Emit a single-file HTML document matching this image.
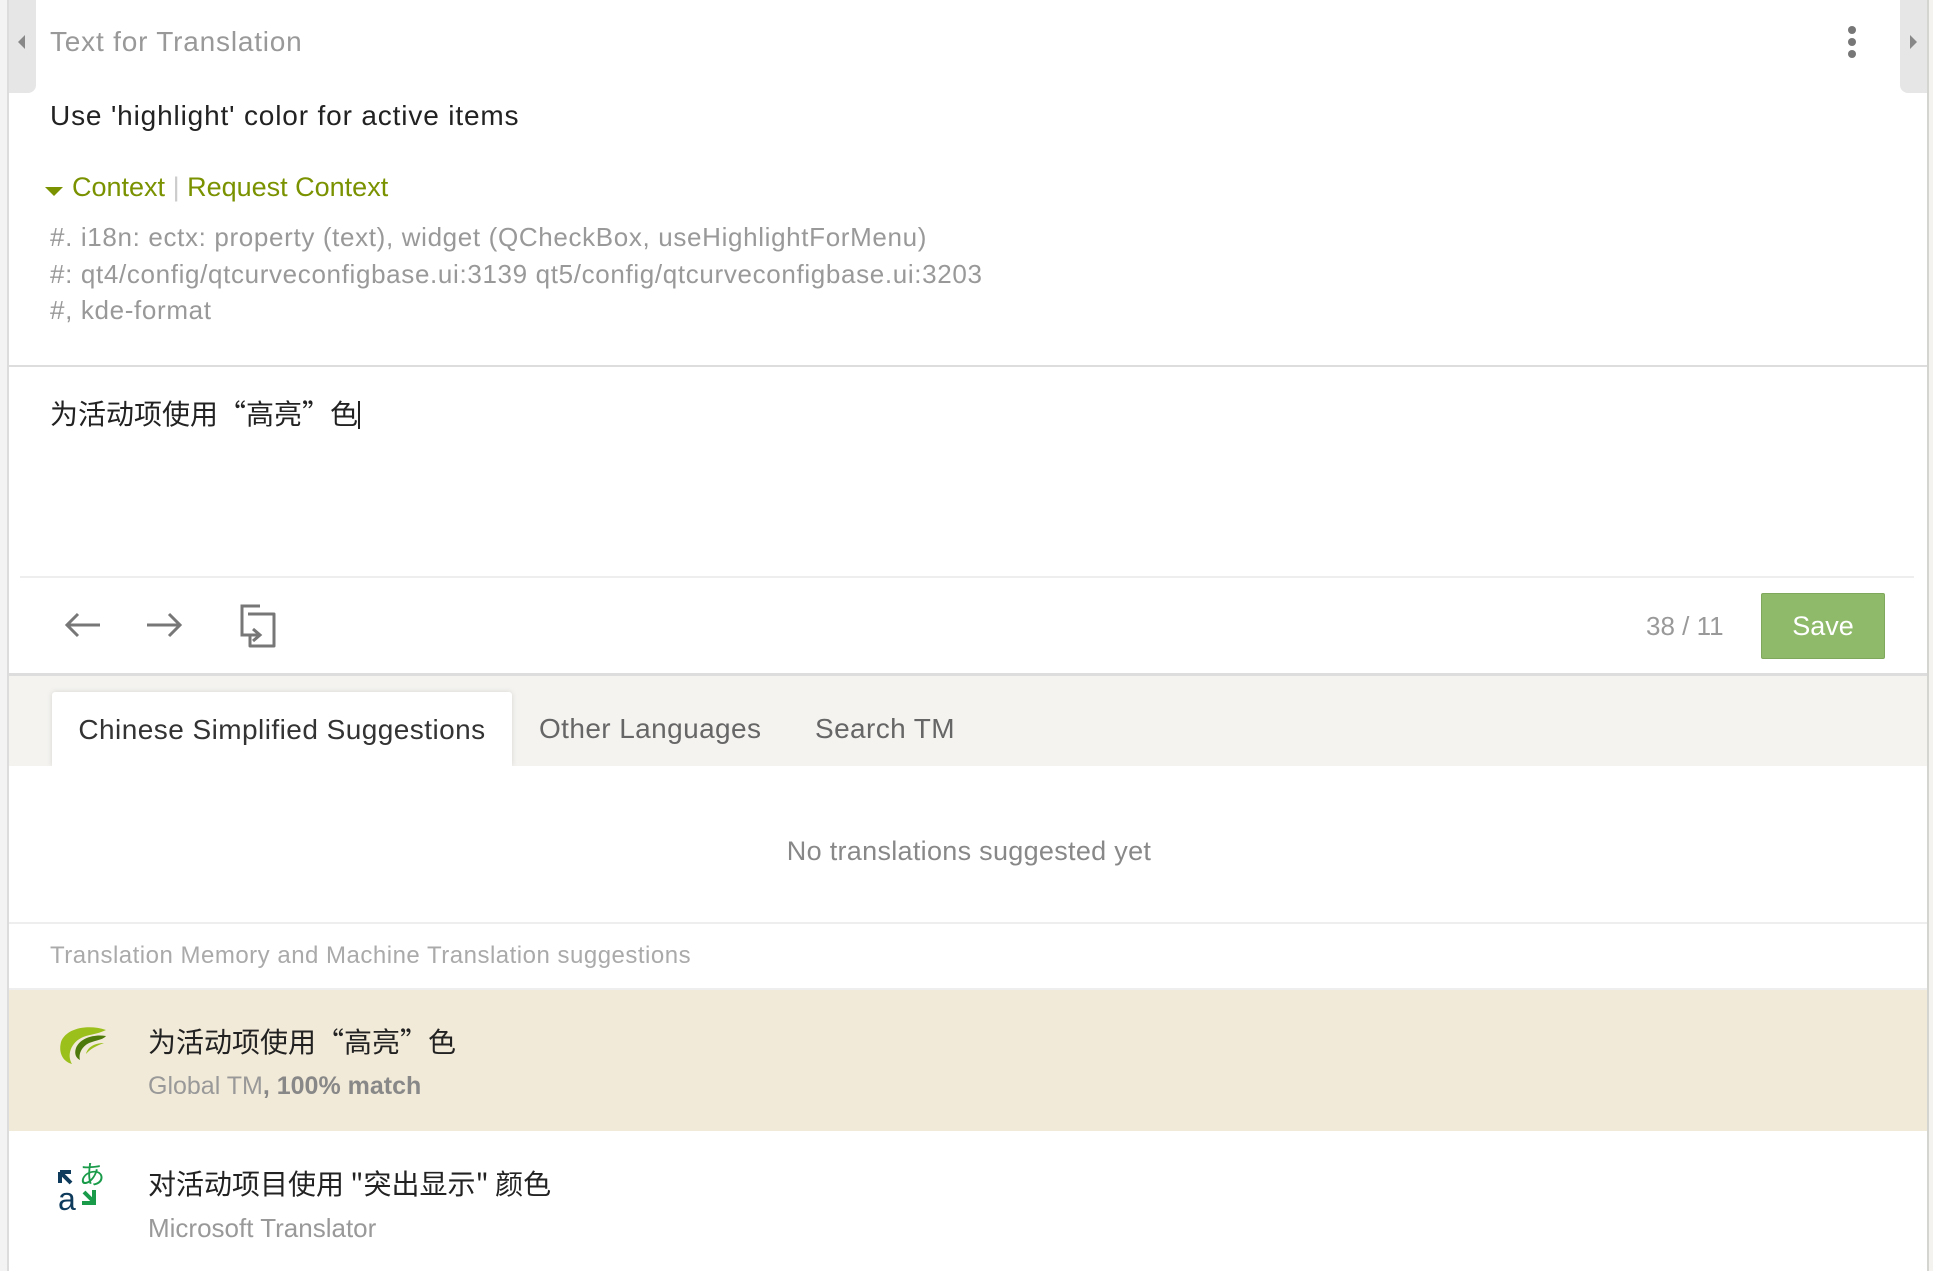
<!DOCTYPE html>
<html><head><meta charset="utf-8"><style>
*{margin:0;padding:0;box-sizing:border-box}
body{width:1933px;height:1271px;background:#fff;position:relative;overflow:hidden;font-family:"Liberation Sans","Noto Sans CJK SC",sans-serif}
.a{position:absolute;white-space:nowrap}
.cjk{font-family:"Noto Sans CJK SC","Liberation Sans",sans-serif}
</style></head><body>
<div class="a" style="left:0;top:0;width:9px;height:1271px;background:#f3f3f3;border-right:2px solid #dcdcdc"></div>
<div class="a" style="left:9px;top:0;width:27px;height:93px;background:#e6e6e6;border-bottom-right-radius:8px"></div>
<div class="a" style="left:18px;top:35px;width:0;height:0;border-top:7px solid transparent;border-bottom:7px solid transparent;border-right:7px solid #888"></div>
<div class="a" style="left:1927px;top:0;width:6px;height:1271px;background:#f4f3f0;border-left:2px solid #d4d4d0"></div>
<div class="a" style="left:1900px;top:0;width:27px;height:93px;background:#e6e6e6;border-bottom-left-radius:8px"></div>
<div class="a" style="left:1910px;top:35px;width:0;height:0;border-top:7px solid transparent;border-bottom:7px solid transparent;border-left:7px solid #888"></div>
<div class="a" style="left:1848px;top:26px;width:8px;height:8px;border-radius:50%;background:#777;box-shadow:0 12px 0 #777,0 24px 0 #777"></div>

<div class="a" style="left:50px;top:26px;font-size:28px;color:#999;letter-spacing:0.8px">Text for Translation</div>
<div class="a" style="left:50px;top:100px;font-size:28px;color:#222;letter-spacing:0.85px">Use 'highlight' color for active items</div>
<div class="a" style="left:45px;top:187px;width:0;height:0;border-left:9px solid transparent;border-right:9px solid transparent;border-top:9px solid #7a9200"></div>
<div class="a" style="left:72px;top:172px;font-size:27px;color:#7a9200">Context <span style="color:#ccc">|</span> Request Context</div>
<div class="a" style="left:50px;top:219px;font-size:26px;color:#999;line-height:36.5px;letter-spacing:0.65px">#. i18n: ectx: property (text), widget (QCheckBox, useHighlightForMenu)<br>#: qt4/config/qtcurveconfigbase.ui:3139 qt5/config/qtcurveconfigbase.ui:3203<br>#, kde-format</div>
<div class="a" style="left:9px;top:365px;width:1918px;height:2px;background:#ddd"></div>
<div class="a cjk" style="left:50px;top:393px;font-size:28px;color:#222">为活动项使用“高亮”色<span style="display:inline-block;width:2px;height:28px;background:#222;vertical-align:-5px"></span></div>
<div class="a" style="left:20px;top:576px;width:1894px;height:2px;background:#eee"></div>

<svg class="a" style="left:60px;top:605px" width="50" height="40" viewBox="0 0 50 40"><path d="M8 20H40M18 9L7 20L18 31" stroke="#777" stroke-width="3" fill="none"/></svg>
<svg class="a" style="left:137px;top:605px" width="50" height="40" viewBox="0 0 50 40"><path d="M10 20H42M32 9L43 20L32 31" stroke="#777" stroke-width="3" fill="none"/></svg>
<svg class="a" style="left:238px;top:604px" width="44" height="44" viewBox="0 0 44 44"><path d="M22 2H4V31H10" stroke="#777" stroke-width="3" fill="none"/><path d="M10 10H36V42H12V31" stroke="#777" stroke-width="3" fill="none" stroke-linejoin="round"/><path d="M5 31H20M15 25L22 31L15 37" stroke="#777" stroke-width="3" fill="none"/></svg>
<div class="a" style="left:1646px;top:611px;font-size:26px;color:#999">38 / 11</div>
<div class="a" style="left:1761px;top:593px;width:124px;height:66px;background:#8fba6a;border:1px solid #7fa85c;border-radius:2px;color:#fff;font-size:27px;text-align:center;line-height:64px">Save</div>

<div class="a" style="left:9px;top:673px;width:1918px;height:3px;background:#ddd"></div>
<div class="a" style="left:9px;top:676px;width:1918px;height:90px;background:#f4f3f0"></div>
<div class="a" style="left:52px;top:692px;width:460px;height:74px;background:#fff;border-radius:3px 3px 0 0;box-shadow:0 0 6px rgba(0,0,0,0.12);color:#333;font-size:28px;text-align:center;line-height:76px;letter-spacing:0.45px">Chinese Simplified Suggestions</div>
<div class="a" style="left:539px;top:713px;font-size:28px;color:#666;letter-spacing:0.4px">Other Languages</div>
<div class="a" style="left:815px;top:713px;font-size:28px;color:#666;letter-spacing:0.4px">Search TM</div>
<div class="a" style="left:9px;top:766px;width:1918px;height:156px;background:#fff"></div>
<div class="a" style="left:0;width:1933px;text-align:center;top:836px;font-size:27px;color:#888;padding-left:5px;letter-spacing:0.3px">No translations suggested yet</div>
<div class="a" style="left:9px;top:922px;width:1918px;height:2px;background:#eee"></div>
<div class="a" style="left:50px;top:942px;font-size:24px;color:#aaa;letter-spacing:0.5px">Translation Memory and Machine Translation suggestions</div>
<div class="a" style="left:9px;top:988px;width:1918px;height:2px;background:#eee"></div>
<div class="a" style="left:9px;top:990px;width:1918px;height:141px;background:#f2ead8"></div>
<svg class="a" style="left:58px;top:1024px" width="52" height="42" viewBox="0 0 52 42"><path d="M48 6C30 0 8 4 3 18C0 30 6 38 14 40C8 30 14 16 28 12C36 10 42 9 48 6Z" fill="#9bc01c"/><path d="M48 12C36 10 22 14 18 24C16 30 18 34 22 36C20 28 26 20 34 18C40 16 46 15 48 12Z" fill="#4e7a0c"/><path d="M46 19C38 19 30 22 28 30C32 25 38 22 46 19Z" fill="#9bc01c"/></svg>
<div class="a cjk" style="left:148px;top:1021px;font-size:28px;color:#222">为活动项使用“高亮”色</div>
<div class="a" style="left:148px;top:1072px;font-size:25px;color:#999">Global TM<b style="color:#888">, 100% match</b></div>
<svg class="a" style="left:58px;top:1160px" width="50" height="54" viewBox="0 0 50 54"><path d="M2 12H13M2 12V23M3 13L13 23" stroke="#0e3a5c" stroke-width="4" fill="none"/><text x="21" y="24" font-size="26" fill="#1a9b4a" font-family="Noto Sans CJK JP">あ</text><text x="0" y="50" font-size="32" fill="#0e3a5c" font-family="Liberation Sans">a</text><path d="M26 32L36 42M36 30V43H24" stroke="#1a9b4a" stroke-width="4" fill="none"/></svg>
<div class="a cjk" style="left:148px;top:1163px;font-size:28px;color:#222">对活动项目使用 "突出显示" 颜色</div>
<div class="a" style="left:148px;top:1213px;font-size:26px;color:#999">Microsoft Translator</div>
</body></html>
